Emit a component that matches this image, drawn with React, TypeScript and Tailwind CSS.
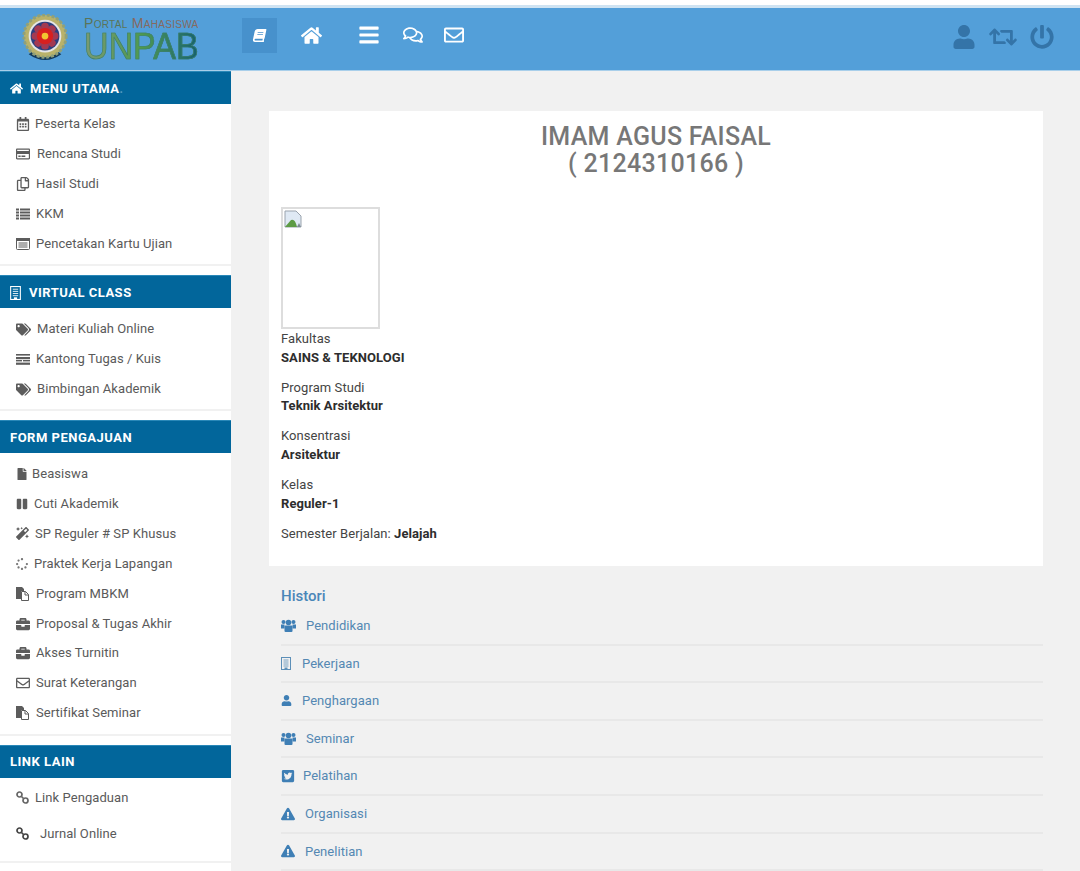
import React from "react";
import {
  FaHome, FaBars, FaRegComments, FaRegEnvelope, FaUser, FaRetweet, FaPowerOff,
  FaRegCalendarAlt, FaRegCreditCard, FaRegCopy, FaTags,
  FaFile, FaPause, FaMagic, FaSpinner, FaBriefcase,
  FaTwitterSquare, FaExclamationTriangle, FaBook,
} from "react-icons/fa";

type Item = { icon: React.ReactNode; label: string; gap: string; h?: string };

const ic = "text-[14px] text-[#5c5c5c] shrink-0";

function RowsIcon() {
  return (
    <svg width="14" height="12" viewBox="0 0 14 12" className="shrink-0" fill="#5c5c5c">
      <rect x="0" y="0.5" width="3" height="2" /><rect x="4" y="0.5" width="10" height="2" />
      <rect x="0" y="3.5" width="3" height="2" /><rect x="4" y="3.5" width="10" height="2" />
      <rect x="0" y="6.5" width="3" height="2" /><rect x="4" y="6.5" width="10" height="2" />
      <rect x="0" y="9.5" width="3" height="2" /><rect x="4" y="9.5" width="10" height="2" />
    </svg>
  );
}
function ListAltIcon() {
  return (
    <svg width="14" height="12" viewBox="0 0 14 12" className="shrink-0" fill="none" stroke="#5c5c5c">
      <rect x="0.5" y="0.5" width="13" height="11" rx="1" />
      <rect x="0.5" y="0.5" width="13" height="2" fill="#5c5c5c" />
      <path d="M2.5 5h9M2.5 7h9M2.5 9h9" />
    </svg>
  );
}
function StackIcon() {
  return (
    <svg width="14" height="11" viewBox="0 0 14 11" className="shrink-0" fill="#5c5c5c">
      <rect x="0" y="0" width="14" height="1.6" />
      <rect x="0" y="3" width="14" height="2.2" />
      <rect x="7" y="6" width="7" height="1.4" />
      <rect x="0" y="8.6" width="14" height="2.2" />
      <rect x="0" y="6" width="6" height="1.4" />
    </svg>
  );
}
function FilesIcon() {
  return (
    <svg width="13" height="14" viewBox="0 0 13 14" className="shrink-0">
      <path d="M0 0h6l2 2v2H5v8H0z" fill="#5c5c5c" />
      <path d="M5.500 4.500h4l3 3v6h-7z" fill="#fff" stroke="#5c5c5c" />
      <path d="M9 4.500v3.500h3.500" fill="none" stroke="#5c5c5c" />
    </svg>
  );
}
function ChainIcon({ dark }: { dark?: boolean }) {
  const c = dark ? "#444" : "#666";
  return (
    <svg width="13" height="13" viewBox="0 0 13 13" className="shrink-0" fill="none" stroke={c} strokeWidth="1.7">
      <circle cx="3.500" cy="3.500" r="2.500" />
      <circle cx="9.500" cy="9.500" r="2.500" />
      <path d="M5.500 5.500l2 2" />
    </svg>
  );
}
function UsersIcon() {
  return (
    <svg width="15" height="13" viewBox="0 0 15 13" className="shrink-0" fill="#3f7fb5">
      <circle cx="2.500" cy="3" r="2" />
      <circle cx="12.500" cy="3" r="2" />
      <circle cx="7.500" cy="3.500" r="2.800" />
      <path d="M0 5.500h3.500v4H0zM11.500 5.500H15v4h-3.500z" />
      <path d="M3.500 7.500q0-1 1-1h6q1 0 1 1V12q0 1-1 1h-6q-1 0-1-1z" />
    </svg>
  );
}
function BuildingIcon({ color, w, h }: { color: string; w: number; h: number }) {
  return (
    <svg width={w} height={h} viewBox="0 0 10 13" className="shrink-0" fill="none" stroke={color}>
      <rect x="0.500" y="0.500" width="9" height="12" />
      <path d="M2.500 3h5M2.500 5h5M2.500 7h5M2.500 9h5" strokeWidth="0.8" />
      <rect x="3.500" y="10.500" width="3" height="2" fill={color} stroke="none" />
    </svg>
  );
}

const cal = "text-[14px] text-[#5c5c5c] shrink-0";
const menuUtama: Item[] = [
  { icon: <FaRegCalendarAlt className={cal} />, label: "Peserta Kelas", gap: "gap-[5px]" },
  { icon: <FaRegCreditCard className={cal} />, label: "Rencana Studi", gap: "gap-[7px]" },
  { icon: <FaRegCopy className={ic} />, label: "Hasil Studi", gap: "gap-[6px]" },
  { icon: <RowsIcon />, label: "KKM", gap: "gap-[6px]" },
  { icon: <ListAltIcon />, label: "Pencetakan Kartu Ujian", gap: "gap-[6px]" },
];
const virtualClass: Item[] = [
  { icon: <FaTags className="text-[15px] text-[#5c5c5c] shrink-0" />, label: "Materi Kuliah Online", gap: "gap-[6px]" },
  { icon: <StackIcon />, label: "Kantong Tugas / Kuis", gap: "gap-[6px]" },
  { icon: <FaTags className="text-[15px] text-[#5c5c5c] shrink-0" />, label: "Bimbingan Akademik", gap: "gap-[6px]" },
];
const formPengajuan: Item[] = [
  { icon: <FaFile className="text-[12px] text-[#5c5c5c] shrink-0" />, label: "Beasiswa", gap: "gap-[4px]" },
  { icon: <FaPause className="text-[12px] text-[#5c5c5c] shrink-0" />, label: "Cuti Akademik", gap: "gap-[6px]" },
  { icon: <FaMagic className="text-[13px] text-[#5c5c5c] shrink-0" />, label: "SP Reguler # SP Khusus", gap: "gap-[6px]" },
  { icon: <FaSpinner className="text-[12px] text-[#777] shrink-0" />, label: "Praktek Kerja Lapangan", gap: "gap-[6px]" },
  { icon: <FilesIcon />, label: "Program MBKM", gap: "gap-[7px]" },
  { icon: <FaBriefcase className={ic} />, label: "Proposal & Tugas Akhir", gap: "gap-[6px]" },
  { icon: <FaBriefcase className={ic} />, label: "Akses Turnitin", gap: "gap-[6px]", h: "h-[29px]" },
  { icon: <FaRegEnvelope className={ic} />, label: "Surat Keterangan", gap: "gap-[6px]", h: "h-[31px]" },
  { icon: <FilesIcon />, label: "Sertifikat Seminar", gap: "gap-[7px]", h: "h-[28px]" },
];
const linkLain: Item[] = [
  { icon: <ChainIcon />, label: "Link Pengaduan", gap: "gap-[6px]", h: "h-[36px]" },
  { icon: <ChainIcon dark />, label: "Jurnal Online", gap: "gap-[11px]", h: "h-[36px]" },
];

const hi = "text-[14px] text-[#3f7fb5] shrink-0";
const histori: Item[] = [
  { icon: <UsersIcon />, label: "Pendidikan", gap: "gap-[10px]" },
  { icon: <BuildingIcon color="#5c8fb8" w={10} h={13} />, label: "Pekerjaan", gap: "gap-[11px]" },
  { icon: <FaUser className="text-[11px] text-[#3f7fb5] shrink-0" />, label: "Penghargaan", gap: "gap-[10px]" },
  { icon: <UsersIcon />, label: "Seminar", gap: "gap-[10px]" },
  { icon: <FaTwitterSquare className={hi} />, label: "Pelatihan", gap: "gap-[8px]" },
  { icon: <FaExclamationTriangle className="text-[14px] text-[#3f7fb5] shrink-0" />, label: "Organisasi", gap: "gap-[10px]" },
  { icon: <FaExclamationTriangle className="text-[14px] text-[#3f7fb5] shrink-0" />, label: "Penelitian", gap: "gap-[10px]" },
];

function Emblem() {
  const petals = [0, 45, 90, 135, 180, 225, 270, 315];
  return (
    <svg width="48" height="50" viewBox="0 0 50 52" className="shrink-0">
      <path d="M8 42 Q25 54 42 42 L38 39 Q25 48 12 39 Z" fill="#123a5c" />
      <circle cx="25" cy="23" r="22" fill="#b9b26a" />
      <circle cx="25" cy="23" r="22" fill="none" stroke="#8fa07a" strokeWidth="3" strokeDasharray="3 2" />
      <circle cx="25" cy="23" r="17" fill="#e6e6e6" />
      <circle cx="25" cy="23" r="15" fill="#2c3f7f" />
      {petals.map((a) => (
        <circle key={a} cx="25" cy="13" r="4" fill="#a33a52" transform={`rotate(${a} 25 23)`} />
      ))}
      <circle cx="25" cy="23" r="8.500" fill="#d8201f" />
      <circle cx="25" cy="23" r="3.500" fill="#f2c531" />
    </svg>
  );
}

function Section({ title, icon, items, list, gap }: { title: React.ReactNode; icon?: React.ReactNode; items: Item[]; list: string; gap: string }) {
  return (
    <section>
      <h2 className={`h-[33px] bg-[#02669b] flex items-center pl-[10px] text-white text-[13px] font-bold tracking-[0.5px] border-t border-[#2a88b8] ${gap}`}>
        {icon}
        <span>{title}</span>
      </h2>
      <ul className={`border-b-2 border-[#f1f1f1] ${list}`}>
        {items.map((it) => (
          <li key={it.label} className={`${it.h ?? "h-[30px]"} flex items-center pl-[16px] text-[13px] tracking-[0.07px] text-[#5a5a5a] ${it.gap}`}>
            {it.icon}
            <span>{it.label}</span>
          </li>
        ))}
      </ul>
    </section>
  );
}

function Field({ label, value }: { label: string; value: string }) {
  return (
    <div className="mb-[11.5px] leading-[18.6px]">
      <div>{label}</div>
      <div className="font-bold text-[#2d2d2d]">{value}</div>
    </div>
  );
}

export default function App() {
  return (
    <div className="w-[1080px] h-[871px] overflow-hidden bg-[#f1f1f1] font-['Roboto','Liberation_Sans',sans-serif] text-[#444]">
      <div className="h-[5px] bg-white" />
      <div className="h-[3px] bg-[#cfe3f2]" />
      <header className="h-[63px] bg-[#539fd9] border-b border-[#a9cfea] flex items-center">
        <div className="w-[231px] flex items-center pl-[21px] gap-[15px] shrink-0">
          <Emblem />
          <div className="flex flex-col items-start pb-[5px]">
            <span className="text-[14px] leading-[14px] font-['Liberation_Sans',sans-serif] [font-variant-caps:small-caps] tracking-[0.3px] whitespace-nowrap text-[#5a7458]">
              Portal <span className="text-[#86695f]">Mahasiswa</span>
            </span>
            <span className="text-[34px] leading-[28px] h-[28px] font-['Liberation_Sans',sans-serif] scale-y-[1.1] origin-top [-webkit-text-stroke:0.6px_#3f7f6a] bg-gradient-to-r from-[#7a9a72] via-[#4f9a4e] to-[#14606e] bg-clip-text text-transparent">UNPAB</span>
          </div>
        </div>
        <nav className="flex items-center pl-[11px] text-white h-full pb-[8px]">
          <span className="w-[35px] h-[35px] bg-[#4791cc] flex items-center justify-center">
            <FaBook className="text-[13px] -skew-x-12" />
          </span>
          <FaHome className="text-[21px] ml-[24px]" />
          <FaBars className="text-[22px] ml-[36px]" />
          <FaRegComments className="text-[20px] ml-[23px]" />
          <FaRegEnvelope className="text-[20px] ml-[21px]" />
        </nav>
        <div className="ml-auto flex items-center gap-[13px] pr-[26px] pb-[4px] text-[#3474a8]">
          <FaUser className="text-[24px]" />
          <FaRetweet className="text-[28px]" />
          <FaPowerOff className="text-[24px]" />
        </div>
      </header>
      <div className="flex items-start">
        <aside className="w-[231px] h-[800px] shrink-0 flex flex-col gap-[9px] bg-white">
          <Section
            title={<>MENU UTAMA<span className="opacity-30">.</span></>}
            gap="gap-[7px] pt-[1px]"
            icon={<FaHome className="text-[13px]" />}
            items={menuUtama}
            list="pt-[5px] pb-[5px]"
          />
          <Section title="VIRTUAL CLASS" gap="gap-[8px] pt-[2px]" icon={<BuildingIcon color="#ffffff" w={11} h={14} />} items={virtualClass} list="pt-[6px] pb-[5px]" />
          <Section title="FORM PENGAJUAN" gap="gap-0 pt-[2px]" items={formPengajuan} list="pt-[5.5px] pb-[7px]" />
          <Section title="LINK LAIN" gap="gap-0 pt-[1px]" items={linkLain} list="pt-[2px] pb-[9px]" />
        </aside>
        <main className="flex-1 pl-[38px] pr-[37px] pt-[40px]">
          <div className="bg-white h-[455px] px-[12px] pt-[12px] text-[13px] tracking-[0.07px]">
            <h1 className="text-center text-[25px] leading-[27px] font-medium tracking-[0.3px] text-[#777]">
              IMAM AGUS FAISAL
              <br />
              ( 2124310166 )
            </h1>
            <div className="w-[99px] h-[122px] border-2 border-[#ddd] mt-[30px] p-[1px]">
              <svg width="18" height="18" viewBox="0 0 18 18">
                <path d="M1 1h11l5 5v11H1z" fill="#dfe9f4" stroke="#9aa3ad" />
                <path d="M1 17 L7 10 Q11 8 13 17 Z" fill="#5d9b45" />
                <path d="M13 17 L15 13 L17 17 Z" fill="#7d8a94" />
              </svg>
            </div>
            <div className="pt-[1px]">
              <Field label="Fakultas" value="SAINS & TEKNOLOGI" />
              <Field label="Program Studi" value="Teknik Arsitektur" />
              <Field label="Konsentrasi" value="Arsitektur" />
              <Field label="Kelas" value="Reguler-1" />
              <div className="leading-[18.6px]">
                Semester Berjalan: <span className="font-bold text-[#2d2d2d]">Jelajah</span>
              </div>
            </div>
          </div>
          <div className="pl-[12px] pt-[20px]">
            <h3 className="text-[15px] leading-[20px] font-medium text-[#4a86b8] mb-[2px]">Histori</h3>
            <ul>
              {histori.map((h) => (
                <li key={h.label} className={`h-[37.6px] flex items-center border-b-2 border-[#e8e8e8] text-[13px] tracking-[0.05px] text-[#5488b3] ${h.gap}`}>
                  {h.icon}
                  <span>{h.label}</span>
                </li>
              ))}
            </ul>
          </div>
        </main>
      </div>
    </div>
  );
}
